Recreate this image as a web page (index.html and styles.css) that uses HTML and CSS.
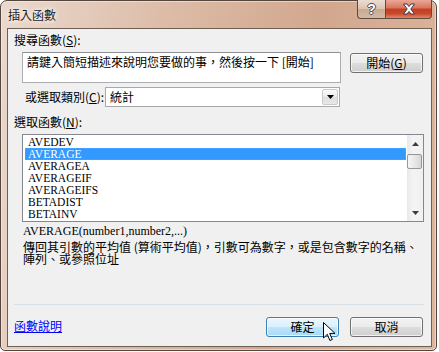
FILE: index.html
```html
<!DOCTYPE html>
<html lang="zh-TW">
<head>
    <meta charset="UTF-8">
    <title>插入函數</title>
    <link rel="stylesheet" href="styles.css">
</head>
<body>
    <div class="window">
        <div class="titlebar">
            <span class="title">插入函數</span>
            <div class="caption-btns">
                <div class="cap-btn cap-help">?</div>
                <div class="cap-btn cap-close">
                    <svg width="14" height="12" viewBox="0 0 14 12">
                        <path d="M1.5 1h3.5l2 2.6 2-2.6h3.5l-3.7 5 3.7 5h-3.5l-2-2.6-2 2.6h-3.5l3.7-5z" fill="#fff" stroke="#3b3b4a" stroke-width="1" stroke-linejoin="round"/>
                    </svg>
                </div>
            </div>
        </div>

        <div class="client">
            <div class="label">搜尋函數(<u>S</u>):</div>
            <div class="search-row">
                <div class="search-box">請鍵入簡短描述來說明您要做的事，然後按一下 [開始]</div>
                <button class="btn btn-go">開始(<u>G</u>)</button>
            </div>

            <div class="category-row">
                <span class="category-label">或選取類別(<u>C</u>):</span>
                <div class="combo">
                    <span class="combo-value">統計</span>
                    <span class="combo-arrow">
                        <svg width="7" height="4" viewBox="0 0 7 4"><path d="M0 0h7l-3.5 4z" fill="#000"/></svg>
                    </span>
                </div>
            </div>

            <div class="label list-label">選取函數(<u>N</u>):</div>
            <div class="listbox">
                <ul class="items">
                    <li>AVEDEV</li>
                    <li class="selected">AVERAGE</li>
                    <li>AVERAGEA</li>
                    <li>AVERAGEIF</li>
                    <li>AVERAGEIFS</li>
                    <li>BETADIST</li>
                    <li>BETAINV</li>
                </ul>
                <div class="scrollbar">
                    <div class="sb-arrow">
                        <svg width="7" height="4" viewBox="0 0 7 4"><path d="M0 4h7l-3.5-4z" fill="#3c3c3c"/></svg>
                    </div>
                    <div class="sb-track">
                        <div class="sb-thumb"></div>
                    </div>
                    <div class="sb-arrow">
                        <svg width="7" height="4" viewBox="0 0 7 4"><path d="M0 0h7l-3.5 4z" fill="#3c3c3c"/></svg>
                    </div>
                </div>
            </div>

            <div class="syntax">AVERAGE(number1,number2,...)</div>
            <div class="desc">
                <div>傳回其引數的平均值 (算術平均值)，引數可為數字，或是包含數字的名稱、</div>
                <div>陣列、或參照位址</div>
            </div>

            <div class="footer">
                <div class="separator"></div>
                <div class="footer-row">
                    <a class="help-link" href="#">函數說明</a>
                    <div class="footer-btns">
                        <button class="btn btn-hover">確定</button>
                        <button class="btn">取消</button>
                    </div>
                </div>
            </div>
        </div>

        <svg class="cursor" width="13" height="20" viewBox="0 0 13 20">
            <path d="M0.5 0.5v15.5l3.8-3.7 2.6 6.2 2.4-1-2.6-6.1h5.3z" fill="#fff" stroke="#000" stroke-width="1" stroke-linejoin="miter"/>
        </svg>
    </div>
</body>
</html>
```

FILE: styles.css
```css
body {
    margin: 0;
    background-color: #ffffff;
    font-family: "Noto Sans CJK TC", "Noto Sans", sans-serif;
    font-size: 12px;
    color: #000;
}
.window {
    position: relative;
    display: flex;
    flex-direction: column;
    box-sizing: border-box;
    width: 437px;
    height: 351px;
    border: 1px solid #54463c;
    border-radius: 7px 7px 5px 5px;
    background: linear-gradient(100deg, #ead9ce 0%, #dcbba6 35%, #d2a78e 65%, #dcb7a0 100%);
    box-shadow: inset 0 0 0 1px rgba(255, 240, 230, 0.55);
}
.titlebar {
    display: flex;
    justify-content: space-between;
    align-items: center;
    height: 27px;
    padding-left: 7px;
}
.title {
    font-size: 12px;
    line-height: 14px;
    color: #1a1a1a;
    text-shadow: 0 0 4px #fff, 0 0 6px rgba(255, 255, 255, 0.8);
}
.caption-btns {
    display: flex;
    align-self: flex-start;
    margin-top: -1px;
    margin-right: 4px;
}
.cap-btn {
    box-sizing: border-box;
    height: 19px;
    display: flex;
    align-items: center;
    justify-content: center;
    border: 1px solid #5e4a3f;
    border-top: none;
}
.cap-help {
    width: 28px;
    border-right: none;
    border-radius: 0 0 0 4px;
    background: linear-gradient(180deg, #ecdcd2 0%, #dcc3b3 50%, #c9a993 51%, #d4b8a5 100%);
    font-family: "Liberation Sans", sans-serif;
    font-weight: bold;
    font-size: 14px;
    color: #fff;
    text-shadow: -1px 0 #4a4a58, 1px 0 #4a4a58, 0 -1px #4a4a58, 0 1px #4a4a58;
}
.cap-close {
    width: 47px;
    border-radius: 0 0 4px 0;
    background: linear-gradient(180deg, #eaa898 0%, #d9735a 45%, #c13f22 50%, #c8482b 75%, #e08868 100%);
}
.client {
    flex: 1;
    display: flex;
    flex-direction: column;
    margin: 0 4px 3px 6px;
    padding: 4px 7px 9px 6px;
    background-color: #f0f0f0;
    border: 1px solid #6e5f55;
}
.label {
    line-height: 14px;
    height: 14px;
}
.search-row {
    display: flex;
    align-items: flex-start;
    gap: 9px;
    margin-top: 5px;
    padding-left: 8px;
}
.search-box {
    box-sizing: border-box;
    width: 319px;
    height: 31px;
    padding: 2px 4px;
    line-height: 14px;
    background-color: #fff;
    border: 1px solid #abadb3;
    border-top-color: #8e9096;
}
.btn {
    box-sizing: border-box;
    width: 73px;
    height: 20px;
    padding: 0;
    font-family: "Noto Sans CJK TC", "Noto Sans", sans-serif;
    font-size: 12px;
    line-height: 16px;
    color: #000;
    border: 1px solid #707070;
    border-radius: 3px;
    background: linear-gradient(180deg, #f2f2f2 0%, #ebebeb 50%, #dddddd 51%, #cfcfcf 100%);
    box-shadow: inset 0 0 0 1px rgba(255, 255, 255, 0.7);
}
.btn-go {
    margin-top: 1px;
}
.btn-hover {
    border-color: #3c7fb1;
    background: linear-gradient(180deg, #eaf6fd 0%, #d9f0fc 50%, #bee6fd 51%, #a7d9f5 100%);
}
.category-row {
    display: flex;
    align-items: center;
    margin-top: 4px;
    padding-left: 11px;
    height: 20px;
}
.category-label {
    width: 80px;
    line-height: 14px;
}
.combo {
    box-sizing: border-box;
    display: flex;
    align-items: center;
    justify-content: space-between;
    width: 235px;
    height: 20px;
    padding: 1px;
    background-color: #fff;
    border: 1px solid #a9a9a9;
}
.combo-value {
    padding-left: 3px;
    line-height: 14px;
}
.combo-arrow {
    box-sizing: border-box;
    display: flex;
    align-items: center;
    justify-content: center;
    width: 16px;
    height: 16px;
    border: 1px solid #c9c9c9;
    border-radius: 2px;
    background: linear-gradient(180deg, #fafafa 0%, #eaeaea 50%, #dedede 51%, #e8e8e8 100%);
}
.list-label {
    margin-top: 8px;
}
.listbox {
    box-sizing: border-box;
    display: flex;
    justify-content: space-between;
    width: 402px;
    height: 88px;
    margin-top: 5px;
    margin-left: 8px;
    background-color: #fff;
    border: 1px solid #828790;
}
.items {
    list-style: none;
    margin: 0;
    padding: 1px 0 0 2px;
    width: 381px;
    font-family: "Liberation Serif", serif;
    font-size: 11.5px;
}
.items li {
    box-sizing: border-box;
    height: 12px;
    line-height: 12px;
    padding-left: 2px;
    border: 0 solid transparent;
    border-width: 0 1px;
    white-space: nowrap;
}
.items li.selected {
    background-color: #3399ff;
    color: #fff;
    border: 1px dotted #d9873f;
    line-height: 10px;
}
.scrollbar {
    display: flex;
    flex-direction: column;
    width: 16px;
    background: linear-gradient(90deg, #e9e9e9 0%, #f4f4f4 40%, #f0f0f0 100%);
}
.sb-arrow {
    display: flex;
    align-items: center;
    justify-content: center;
    height: 17px;
}
.sb-track {
    flex: 1;
    padding-top: 2px;
}
.sb-thumb {
    box-sizing: border-box;
    width: 15px;
    height: 15px;
    border: 1px solid #979797;
    border-radius: 2px;
    background: linear-gradient(90deg, #f6f6f6 0%, #e8e8e8 50%, #d6d6d6 100%);
}
.syntax {
    margin-top: 2px;
    margin-left: 9px;
    font-family: "Liberation Serif", serif;
    font-size: 12px;
    line-height: 14px;
}
.desc {
    margin-top: 3px;
    margin-left: 9px;
    line-height: 12px;
    white-space: nowrap;
}
.footer {
    margin-top: auto;
}
.separator {
    height: 1px;
    background-color: #d5dfe5;
}
.footer-row {
    display: flex;
    justify-content: space-between;
    align-items: center;
    margin-top: 12px;
    padding-right: 1px;
}
.help-link {
    color: #0000ff;
    line-height: 14px;
    margin-bottom: 3px;
}
.footer-btns {
    display: flex;
    gap: 11px;
}
.cursor {
    position: absolute;
    left: 322px;
    top: 321px;
}
```
